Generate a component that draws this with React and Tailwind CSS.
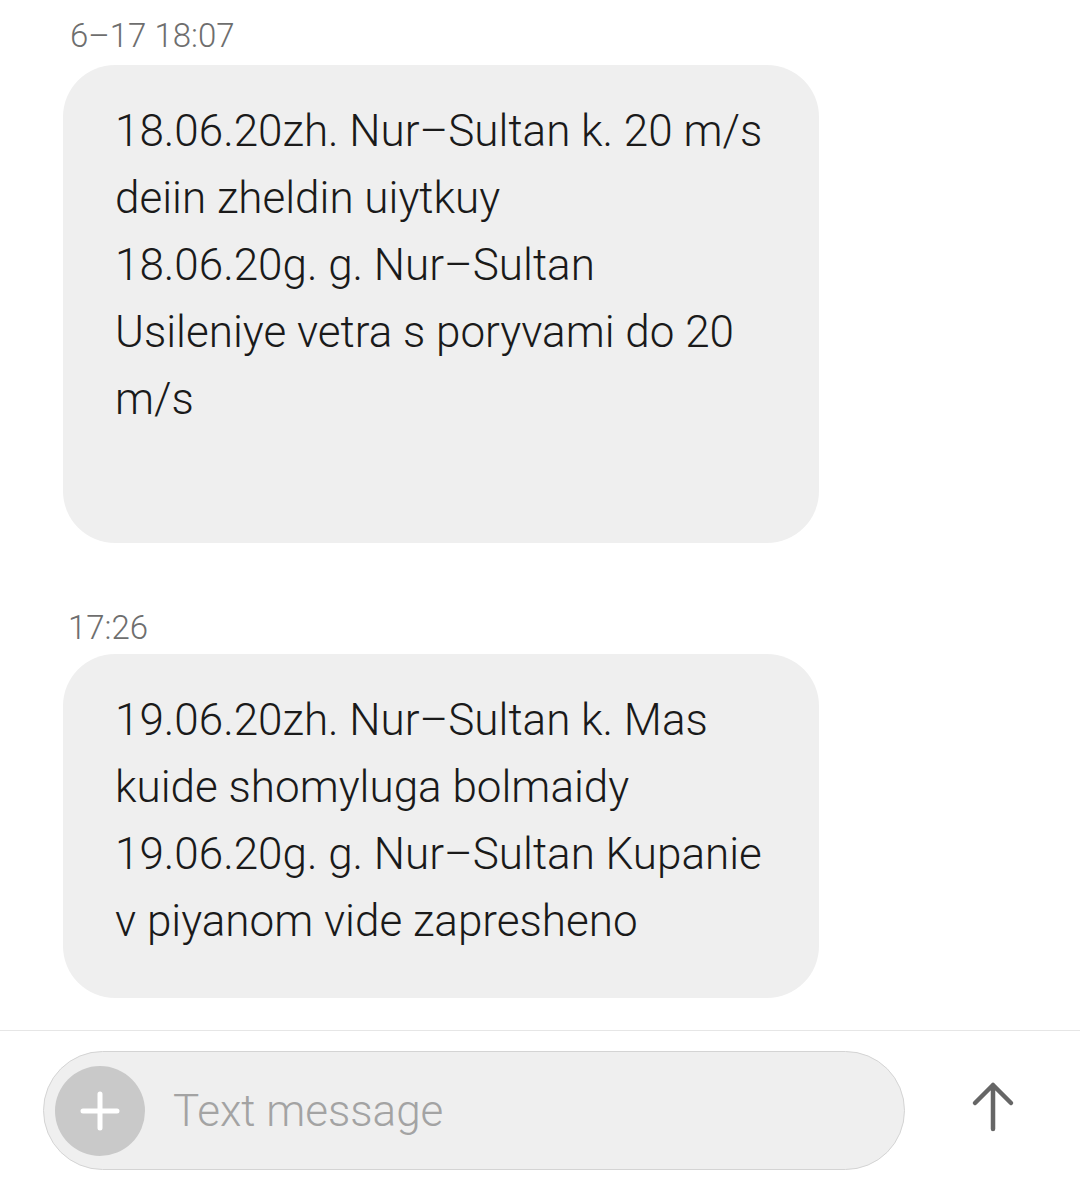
import React from "react";

const font = { fontFamily: "Roboto, 'Noto Sans', sans-serif" };

const Bubble = ({ lines, extra }) => (
  <div className="w-[756px] rounded-[52px] bg-[#efefef] pl-[52px] pr-[30px] pt-[33px] pb-[43px]">
    {lines.map((l, i) => (
      <div key={i} className="h-[67px] leading-[67px] text-[44px] font-light text-[#1a1a1a] whitespace-nowrap">
        {l}
      </div>
    ))}
    {extra && <div className="h-[67px]"></div>}
  </div>
);

export default function App() {
  return (
    <div className="w-[1080px] h-[1192px] bg-white flex flex-col" style={font}>
      <div className="flex-1 pl-[63px]">
        <div className="pl-[7px] pt-[16px] h-[65px] text-[33px] leading-[40px] font-light text-[#6e6e6e]">
          6–17 18:07
        </div>
        <Bubble
          extra
          lines={[
            "18.06.20zh. Nur–Sultan k. 20 m/s",
            "deiin zheldin uiytkuy",
            "18.06.20g. g. Nur–Sultan",
            "Usileniye vetra s poryvami do 20",
            "m/s",
          ]}
        />
        <div className="pl-[5px] pt-[65px] h-[111px] text-[33px] leading-[40px] font-light text-[#6e6e6e]">
          17:26
        </div>
        <Bubble
          lines={[
            "19.06.20zh. Nur–Sultan k. Mas",
            "kuide shomyluga bolmaidy",
            "19.06.20g. g. Nur–Sultan Kupanie",
            "v piyanom vide zapresheno",
          ]}
        />
      </div>

      <div className="h-[162px] border-t border-[#e6e6e6] flex items-start pt-[20px] pl-[43px]">
        <div className="w-[862px] h-[119px] rounded-full border border-[#d4d4d4] bg-[#efefef] flex items-center pl-[11px]">
          <div className="w-[90px] h-[90px] rounded-full bg-[#c9c9c9] flex items-center justify-center">
            <svg width="40" height="40" viewBox="0 0 40 40">
              <path d="M20 3 V37 M3 20 H37" stroke="white" strokeWidth="5" strokeLinecap="round" />
            </svg>
          </div>
          <span className="ml-[28px] text-[44px] font-light text-[#a3a3a3]">Text message</span>
        </div>
        <div className="ml-[64px] mt-[30px]">
          <svg width="48" height="52" viewBox="0 0 48 52">
            <path d="M24 4 V48 M6 22 L24 4 L42 22" stroke="#666666" strokeWidth="4.5" fill="none" strokeLinecap="round" strokeLinejoin="round" />
          </svg>
        </div>
      </div>
    </div>
  );
}
